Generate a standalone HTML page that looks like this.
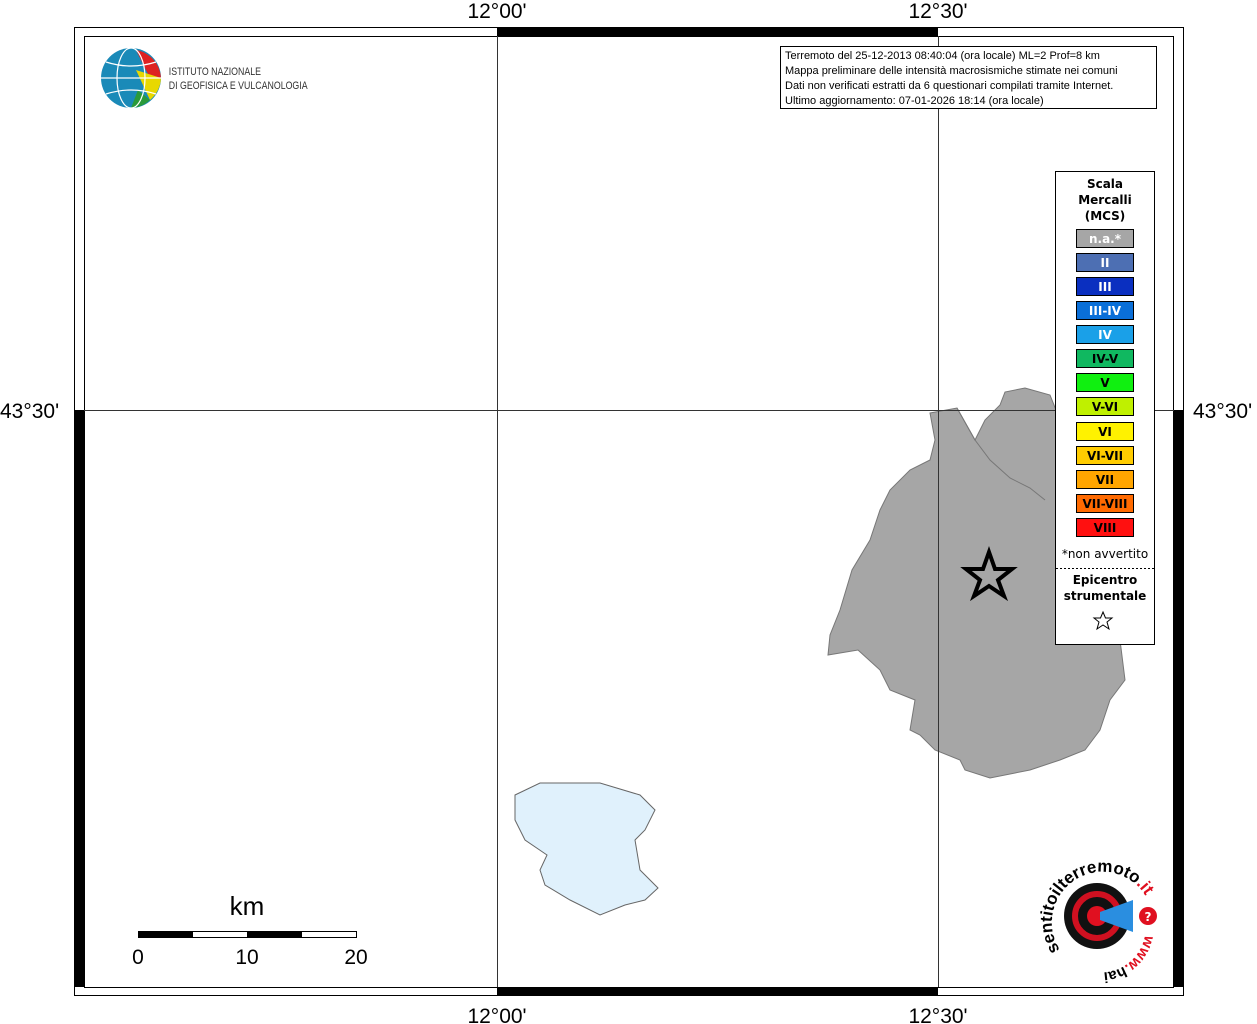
<!DOCTYPE html>
<html><head><style>
body{margin:0;background:#fff;width:1257px;height:1024px;overflow:hidden;font-family:"DejaVu Sans","Liberation Sans",sans-serif}
</style></head><body>
<svg width="1257" height="1024" xmlns="http://www.w3.org/2000/svg" style="position:absolute;left:0;top:0">
<rect x="74.5" y="27.5" width="1109" height="968" fill="#fff" stroke="#000"/>
<rect x="84.5" y="36.5" width="1089" height="951" fill="none" stroke="#000"/>
<rect x="497" y="27" width="441" height="9" fill="#000"/>
<rect x="497" y="987" width="441" height="9" fill="#000"/>
<rect x="74" y="410" width="10" height="577" fill="#000"/>
<rect x="1174" y="410" width="10" height="577" fill="#000"/>
<polygon fill="#a6a6a6" stroke="#777" stroke-width="1" points="930,413 957,408 975,440 985,420 1000,405 1005,392 1025,388 1050,395 1060,420 1060,520 1100,600 1120,640 1125,680 1110,700 1100,730 1085,750 1060,760 1030,770 990,778 965,770 960,760 935,750 920,735 910,730 915,700 890,690 880,670 858,650 828,655 830,635 840,610 852,570 870,540 880,510 890,490 910,470 930,460 935,440"/>
<polyline fill="none" stroke="#777" points="957,408 975,440 990,460 1010,478 1030,488 1045,500"/>
<polygon fill="#e0f1fc" stroke="#666" points="515,795 540,783 600,783 640,795 655,810 645,830 635,840 640,870 658,888 645,900 625,905 600,915 570,900 545,885 540,870 547,855 525,840 515,820"/>
<line x1="497.5" y1="36" x2="497.5" y2="987" stroke="#333"/>
<line x1="938.5" y1="36" x2="938.5" y2="987" stroke="#333"/>
<line x1="84" y1="410.5" x2="1174" y2="410.5" stroke="#333"/>
<polygon points="989,552 995,569 1012,569 998,580 1004,596 989,586 974,596 980,580 966,569 983,569" fill="none" stroke="#000" stroke-width="4"/>
<g font-family="Liberation Sans" font-size="21" fill="#000">
<text x="497" y="18" text-anchor="middle">12°00'</text>
<text x="938" y="18" text-anchor="middle">12°30'</text>
<text x="497" y="1023" text-anchor="middle">12°00'</text>
<text x="938" y="1023" text-anchor="middle">12°30'</text>
<text x="0" y="418">43°30'</text>
<text x="1193" y="418">43°30'</text>
<text x="247" y="915" text-anchor="middle" font-size="26">km</text>
<text x="138" y="964" text-anchor="middle">0</text>
<text x="247" y="964" text-anchor="middle">10</text>
<text x="356" y="964" text-anchor="middle">20</text>
</g>
<rect x="138.5" y="931.5" width="218" height="6" fill="#fff" stroke="#000"/>
<rect x="138" y="931" width="55" height="6" fill="#000"/>
<rect x="247" y="931" width="55" height="6" fill="#000"/>
<!-- INGV logo -->
<circle cx="131" cy="78" r="30" fill="#1a8ab8"/>
<path d="M136,50 A30,30 0 0 1 161,78 L150,78 Z" fill="#d22"/>
<path d="M136,70 L161,78 A30,30 0 0 1 150,100 Z" fill="#e8d800"/>
<path d="M138,90 L150,100 A30,30 0 0 1 131,108 Z" fill="#2a9a3a"/>
<g stroke="#fff" stroke-width="1.2" fill="none"><ellipse cx="131" cy="78" rx="14" ry="30"/><line x1="101" y1="78" x2="161" y2="78"/><path d="M106,62 Q131,70 156,62"/><path d="M106,94 Q131,86 156,94"/></g>
<g font-family="Liberation Sans" font-size="11" fill="#333" transform="scale(0.8,1)"><text x="211" y="75">ISTITUTO NAZIONALE</text><text x="211" y="89">DI GEOFISICA E VULCANOLOGIA</text></g>
<!-- info box -->
<rect x="780.5" y="46.5" width="376" height="62" fill="#fff" stroke="#000"/>
<g font-family="Liberation Sans" font-size="11"><text x="785" y="59">Terremoto del 25-12-2013 08:40:04 (ora locale) ML=2 Prof=8 km</text><text x="785" y="74">Mappa preliminare delle intensità macrosismiche stimate nei comuni</text><text x="785" y="89">Dati non verificati estratti da 6 questionari compilati tramite Internet.</text><text x="785" y="104">Ultimo aggiornamento: 07-01-2026 18:14 (ora locale)</text></g>
<!-- legend -->
<rect x="1055.5" y="171.5" width="99" height="473" fill="#fff" stroke="#000"/>
<g font-size="12" font-weight="bold" text-anchor="middle"><text x="1105" y="188">Scala</text><text x="1105" y="204">Mercalli</text><text x="1105" y="220">(MCS)</text></g>
<g stroke="#000" font-size="12" font-weight="bold" text-anchor="middle">
<rect x="1076.5" y="229.5" width="57" height="18" fill="#a6a6a6"/><text x="1105" y="243" fill="#fff" stroke="none">n.a.*</text>
<rect x="1076.5" y="253.5" width="57" height="18" fill="#4d6fb3"/><text x="1105" y="267" fill="#fff" stroke="none">II</text>
<rect x="1076.5" y="277.5" width="57" height="18" fill="#0a2fc0"/><text x="1105" y="291" fill="#fff" stroke="none">III</text>
<rect x="1076.5" y="301.5" width="57" height="18" fill="#0a6fd8"/><text x="1105" y="315" fill="#fff" stroke="none">III-IV</text>
<rect x="1076.5" y="325.5" width="57" height="18" fill="#1aa0e8"/><text x="1105" y="339" fill="#fff" stroke="none">IV</text>
<rect x="1076.5" y="349.5" width="57" height="18" fill="#10b860"/><text x="1105" y="363" fill="#000" stroke="none">IV-V</text>
<rect x="1076.5" y="373.5" width="57" height="18" fill="#10f010"/><text x="1105" y="387" fill="#000" stroke="none">V</text>
<rect x="1076.5" y="397.5" width="57" height="18" fill="#bff000"/><text x="1105" y="411" fill="#000" stroke="none">V-VI</text>
<rect x="1076.5" y="422.5" width="57" height="18" fill="#fff200"/><text x="1105" y="436" fill="#000" stroke="none">VI</text>
<rect x="1076.5" y="446.5" width="57" height="18" fill="#ffcc00"/><text x="1105" y="460" fill="#000" stroke="none">VI-VII</text>
<rect x="1076.5" y="470.5" width="57" height="18" fill="#ffa500"/><text x="1105" y="484" fill="#000" stroke="none">VII</text>
<rect x="1076.5" y="494.5" width="57" height="18" fill="#ff6a00"/><text x="1105" y="508" fill="#000" stroke="none">VII-VIII</text>
<rect x="1076.5" y="518.5" width="57" height="18" fill="#ff1010"/><text x="1105" y="532" fill="#000" stroke="none">VIII</text>
</g>
<text x="1105" y="558" font-size="12" text-anchor="middle">*non avvertito</text>
<line x1="1056" y1="568.5" x2="1154" y2="568.5" stroke="#000" stroke-dasharray="2,2"/>
<g font-size="12" font-weight="bold" text-anchor="middle"><text x="1105" y="584">Epicentro</text><text x="1105" y="600">strumentale</text></g>
<polygon points="1103,612 1105.5,618 1112,618 1107,622 1109,629 1103,625 1097,629 1099,622 1094,618 1100.5,618" fill="none" stroke="#000"/>
<!-- haisentito logo -->
<circle cx="1097" cy="916" r="33" fill="#111"/>
<circle cx="1097" cy="916" r="22" fill="none" stroke="#d01020" stroke-width="6"/>
<circle cx="1097" cy="916" r="10" fill="#e01020"/>
<polygon points="1100,912 1133,900 1133,932 1100,920" fill="#2a8ee0"/>
<circle cx="1148" cy="916" r="9" fill="#e01020"/><text x="1148" y="921" font-size="12" font-weight="bold" fill="#fff" text-anchor="middle">?</text>
<path id="arc" d="M1060,950 A45,45 0 1 1 1145,895" fill="none"/>
<text font-family="Liberation Sans" font-size="17" font-weight="bold"><textPath href="#arc">sentitoilterremoto<tspan fill="#e01020">.it</tspan></textPath></text>
<path id="arc2" d="M1145,935 A45,45 0 0 1 1065,955" fill="none"/>
<text font-family="Liberation Sans" font-size="15" font-weight="bold"><textPath href="#arc2"><tspan fill="#e01020">www.</tspan>hai</textPath></text>
</svg>
</body></html>
